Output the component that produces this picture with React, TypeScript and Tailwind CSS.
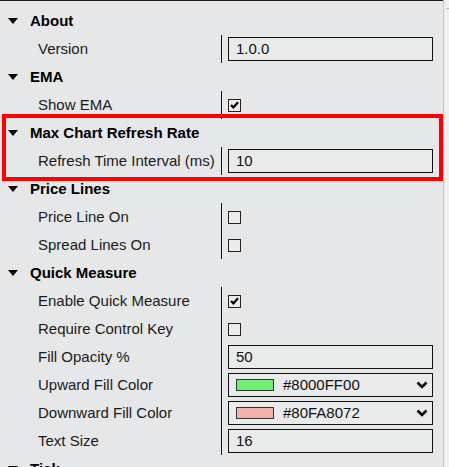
import React from 'react';

type Prop =
    | { label: string; kind: 'text'; value: string }
    | { label: string; kind: 'check'; value: boolean }
    | { label: string; kind: 'color'; value: string; swatch: string };

type Group = { title: string; props: Prop[]; highlight?: boolean };

const groups: Group[] = [
    { title: 'About', props: [{ label: 'Version', kind: 'text', value: '1.0.0' }] },
    { title: 'EMA', props: [{ label: 'Show EMA', kind: 'check', value: true }] },
    {
        title: 'Max Chart Refresh Rate',
        highlight: true,
        props: [{ label: 'Refresh Time Interval (ms)', kind: 'text', value: '10' }],
    },
    {
        title: 'Price Lines',
        props: [
            { label: 'Price Line On', kind: 'check', value: false },
            { label: 'Spread Lines On', kind: 'check', value: false },
        ],
    },
    {
        title: 'Quick Measure',
        props: [
            { label: 'Enable Quick Measure', kind: 'check', value: true },
            { label: 'Require Control Key', kind: 'check', value: false },
            { label: 'Fill Opacity %', kind: 'text', value: '50' },
            { label: 'Upward Fill Color', kind: 'color', value: '#8000FF00', swatch: '#70f070' },
            { label: 'Downward Fill Color', kind: 'color', value: '#80FA8072', swatch: '#f2b3ab' },
            { label: 'Text Size', kind: 'text', value: '16' },
        ],
    },
    { title: 'Tick', props: [] },
];

function Triangle() {
    return (
        <svg width="10" height="6" viewBox="0 0 10 6" className="shrink-0">
            <polygon points="0,0 10,0 5,6" fill="#000" />
        </svg>
    );
}

function Value({ prop }: { prop: Prop }) {
    if (prop.kind === 'check') {
        return (
            <div className="w-[13px] h-[13px] border border-[#222] bg-[#eaebeb] flex items-center justify-center">
                {prop.value && (
                    <svg width="9" height="8" viewBox="0 0 9 8">
                        <path d="M1 4 L3.4 6.4 L8 1.2" stroke="#000" strokeWidth="2.2" fill="none" />
                    </svg>
                )}
            </div>
        );
    }
    if (prop.kind === 'color') {
        return (
            <div className="w-[205px] h-[24px] border border-[#111] bg-[#e9eaea] flex items-center pl-[7px] pr-[3px]">
                <div className="w-[38px] h-[12px] border border-[#333]" style={{ backgroundColor: prop.swatch }} />
                <span className="ml-[9px] flex-1">{prop.value}</span>
                <svg width="12" height="8" viewBox="0 0 12 8" className="mr-[1px]">
                    <path d="M1.5 1.5 L6 6 L10.5 1.5" stroke="#000" strokeWidth="2.6" fill="none" />
                </svg>
            </div>
        );
    }
    return (
        <div className="w-[205px] h-[24px] border border-[#111] bg-[#e9eaea] flex items-center pl-[7px]">
            {prop.value}
        </div>
    );
}

export default function App() {
    return (
        <div
            className="w-[449px] h-[467px] overflow-hidden flex bg-[#e6e7e8] text-[15px] text-[#111]"
            style={{ fontFamily: '"Liberation Sans", Arial, sans-serif' }}
        >
            <div className="w-[443px] border-t border-[#222] pt-[6px]">
                {groups.map((g) => (
                    <div key={g.title} className="relative">
                        <div className="h-[28px] flex items-center pl-[8px] font-bold text-black">
                            <Triangle />
                            <span className="ml-[12px]">{g.title}</span>
                        </div>
                        {g.props.length > 0 && (
                            <div className="grid grid-cols-[221px_1fr]">
                                <div>
                                    {g.props.map((p) => (
                                        <div key={p.label} className="h-[28px] flex items-center pl-[38px] text-[#1a1a1a]">
                                            {p.label}
                                        </div>
                                    ))}
                                </div>
                                <div className="border-l border-[#111] pl-[6px]">
                                    {g.props.map((p) => (
                                        <div key={p.label} className="h-[28px] flex items-center">
                                            <Value prop={p} />
                                        </div>
                                    ))}
                                </div>
                            </div>
                        )}
                        {g.highlight && (
                            <div className="absolute left-[2px] right-0 top-[-5px] bottom-[-6px] border-[4px] border-[#ff0000] pointer-events-none" />
                        )}
                    </div>
                ))}
            </div>
            <div className="flex-1 border-l border-[#c4c4c4] bg-[#f0f0f0] relative">
                <div className="absolute left-[2px] top-[8px] w-[3px] h-px bg-[#b8b8b8]" />
            </div>
        </div>
    );
}
